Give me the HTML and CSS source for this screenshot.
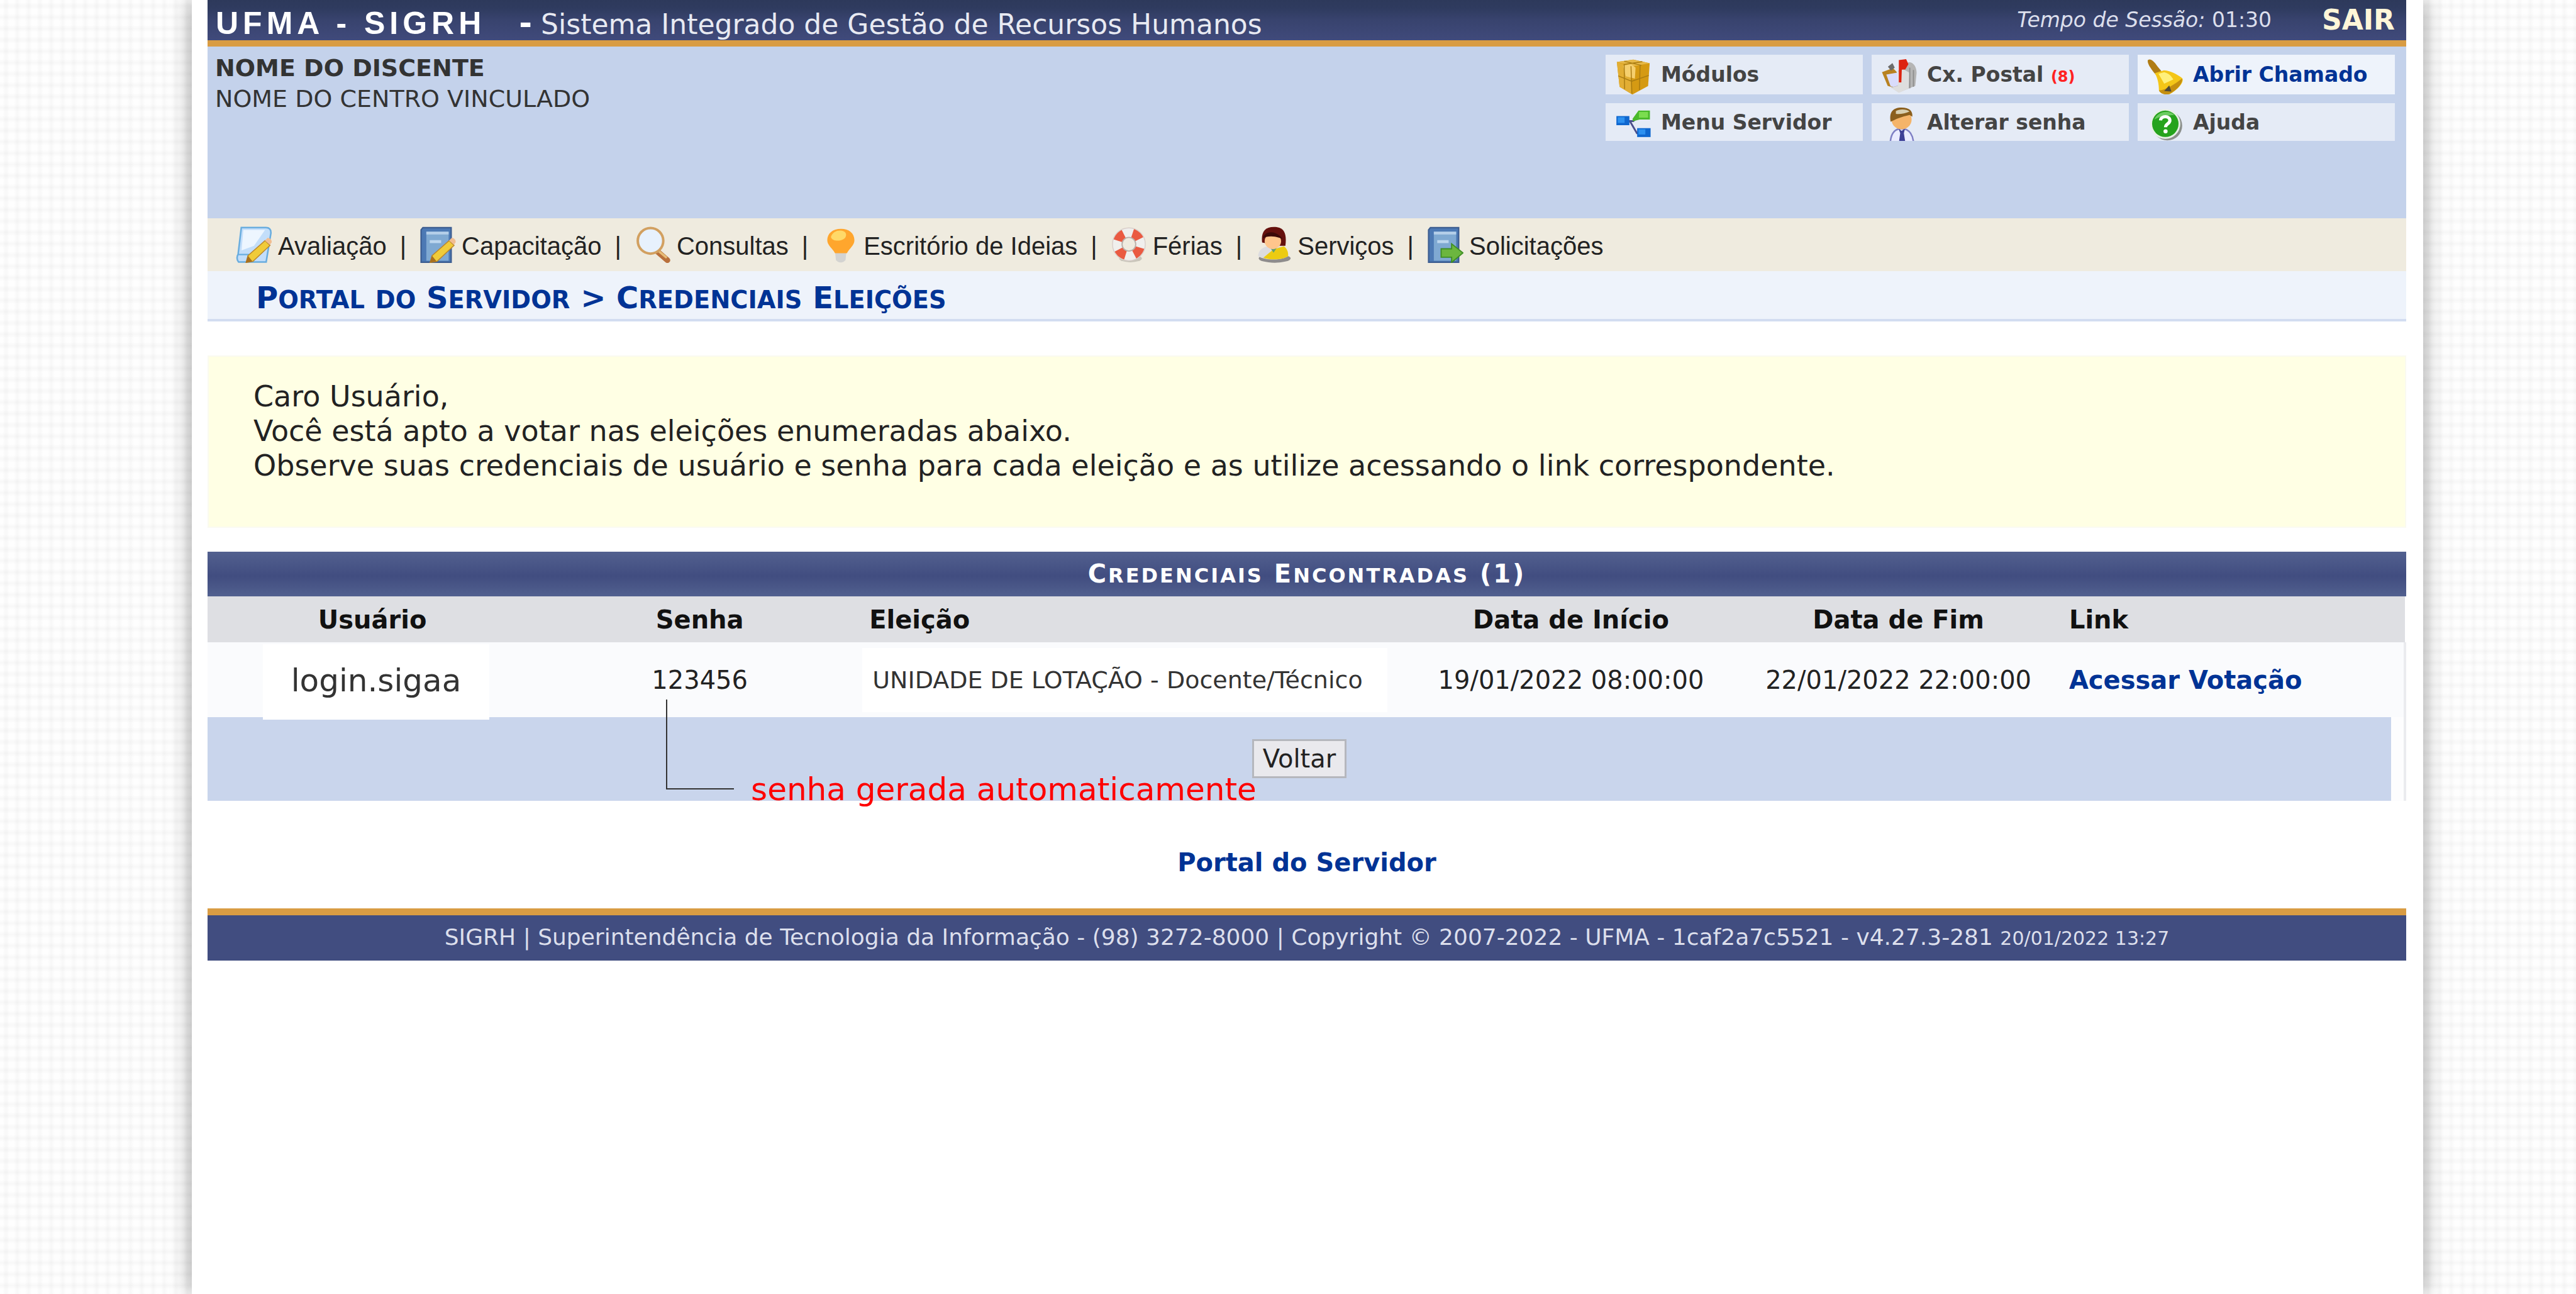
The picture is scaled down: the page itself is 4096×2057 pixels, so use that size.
FILE: index.html
```
<!DOCTYPE html>
<html lang="pt-BR">
<head>
  <meta charset="UTF-8">
  <title>SIGRH - Credenciais Eleições</title>
  <link rel="stylesheet" href="styles.css">
</head>
<body>
  <div class="pagina">

    <header class="cabecalho">
      <h1 class="titulo"><span class="sigla">UFMA - SIGRH</span><span class="traco">-</span><span class="sistema">Sistema Integrado de Gestão de Recursos Humanos</span></h1>
      <div class="sessao">
        <span><em>Tempo de Sessão:</em> 01:30</span>
        <a class="sair" href="#">SAIR</a>
      </div>
    </header>

    <section class="painel">
      <div class="usuario">
        <strong>NOME DO DISCENTE</strong><br>
        NOME DO CENTRO VINCULADO
      </div>
      <div class="modulos">
        <a href="#">
          <svg class="icone" viewBox="0 0 16 16">
            <path d="M.8 1.5 8 .5l7.2 1.6-.7 10L7.6 15.8 2 12.4z" fill="#d59a13"/>
            <path d="M.8 1.5 8 .5l7.2 1.6L8 3.4z" fill="#e6b848"/>
            <path d="M.8 1.5 7 3.6v11.8L2 12.4z" fill="#e2ae34"/>
            <path d="M3.500 3.200 7 2.400l2 1.600-.3 4.800-4-1z" fill="#f5cf6e"/>
            <path d="M1.400 7.600 7.300 10l7.500-2.600M7 3.400l.4 12M11 2.800l-.3 11M4 2.400l.2 11M4 1.200l7.600 1.800M12 1.400 4 2.600" fill="none" stroke="#a87b12" stroke-width=".4"/>
          </svg>
          Módulos
        </a>
        <a href="#">
          <svg class="icone" viewBox="0 0 16 16">
            <path d="m.4 6 4.800-1.800 1.700 1.700L6.400 13l-3.500-1z" fill="#b88220"/>
            <path d="m3 3.600 2-1.600 1 2-1.600 1.400z" fill="#6c6c6c"/>
            <path d="m2.300 7 4.700-.8.600 6.600-3.400-.6z" fill="#d9dcfb"/>
            <path d="m7.400 5.500 4.500-3.800c2.200-.3 3.700 2 3.700 4.600L15 12l-7.200 2.900-3.400-2.200 3.200-.9z" fill="#b5b5b5"/>
            <path d="m7.400 5.800 2-1.300 3 1.700-.3 7L7.800 15l-3.400-2.200 3-.8z" fill="#dedede"/>
            <path d="M12.600 4v9M14.200 5v7.400" stroke="#8d8d8d" stroke-width=".5"/>
            <path d="M7.800.7 11 .3l1 2.200-1.400 2.300-1.500.1-.2 5.600H7.800z" fill="#dd2310"/>
          </svg>
          <span>Cx. Postal <small>(8)</small></span>
        </a>
        <a class="chamado" href="#">
          <svg class="icone" viewBox="0 0 16 16">
            <path d="M.4.6C1.500 0 2.700.7 4.600 3.500L7 6.400 4.200 7.600C2 5-.3 2 .4.6z" fill="#b07c14"/>
            <path d="m3.400 6.400 4-1.200c3.200.3 5.600 1.700 8 3.400 1 1.300-1.200 4.600-5.400 7-2 .7-4.200-.5-4.800-1.600C5.200 11 4.600 8.500 3.400 6.400z" fill="#f4c617"/>
            <path d="M5 6.700 7.500 6c2.500.7 3.200 1.900 4 3.200L7.500 11z" fill="#fff07a"/>
            <path d="M15.300 8.800c.6 1.600-2 5.100-5.600 6.800-2 .5-4-.3-4.500-1.600 3-.2 7.300-3 10.100-5.200z" fill="#c58f10"/>
            <path d="m7.500 14.300 2.200-2.500 1 2.700z" fill="#4f4a38"/>
          </svg>
          Abrir Chamado
        </a>
        <a href="#">
          <svg class="icone" viewBox="0 0 16 16">
            <path d="M6 6.200h2l3.200-3M6.500 6.200 9.600 11.500h2" fill="none" stroke="#4a4f8c" stroke-width=".8"/>
            <path d="M7.700 5.200 10.300 1.600h5v3.900h-4.500l-3 .8z" fill="#49b92b"/>
            <path d="M10.500 2.200h4v2.500h-4z" fill="#7bdd4f"/>
            <path d="M.6 4h5.700v4H.6z" fill="#0f67cf"/>
            <path d="M1.200 4.500h3v2.500h-3z" fill="#2d91f0"/>
            <path d="M9.700 9.300h5.900v3.900H9.700z" fill="#0f67cf"/>
            <path d="M10.300 9.800h3v2.300h-3z" fill="#2d91f0"/>
          </svg>
          Menu Servidor
        </a>
        <a href="#">
          <svg class="icone" viewBox="0 0 16 16">
            <path d="M4 17c0-4.500 1.500-7.500 5-7.500s5.300 3 5.300 7.500z" fill="#e9ebff" stroke="#7f80c4" stroke-width=".7"/>
            <path d="m7.700 9.500 1.300 1 1.500-1-.5 2 .8 5H7.700l.7-5z" fill="#3d3f96"/>
            <ellipse cx="9" cy="5.500" rx="4.400" ry="4.300" fill="#f5b469"/>
            <path d="M4.200 6.500C3.500 2.500 5 .3 9 .3c3.400 0 5 1.500 4.700 4L12.500 3.500C10.500 4 8 4.500 4.200 6.500z" fill="#8b5f1d"/>
            <path d="M6.500 1.800C8 .8 11 .8 12.500 2c-2 1-4.500 1.200-6 1z" fill="#d8cfb0"/>
          </svg>
          Alterar senha
        </a>
        <a href="#">
          <svg class="icone" viewBox="0 0 16 16">
            <circle cx="8.900" cy="8.200" r="6.500" fill="#8b8f8b"/>
            <circle cx="8" cy="7.400" r="6.600" fill="#e6efe6"/>
            <circle cx="8" cy="7.400" r="5.800" fill="#25a31c"/>
            <path d="M3.200 5.500C4.500 2 9.500 1 12 3.600c-3 0-6.500.6-8.800 1.900z" fill="#6ccc62"/>
            <path d="M5.900 5.900C6 3.800 10 3.700 10 5.900c0 1.500-1.900 1.500-1.900 3" fill="none" stroke="#fff" stroke-width="1.400"/>
            <circle cx="8.100" cy="10.700" r=".9" fill="#fff"/>
          </svg>
          Ajuda
        </a>
      </div>
    </section>

    <nav class="menu">
      <a href="#">
        <svg class="icone" viewBox="0 0 16 16">
          <path d="M2.400.5h10.800c1.500 0 2.200.8 2.200 2.300L13.300 15.600H1.200C.3 14.500.4 13 1 12.200z" fill="#c3defa" stroke="#69addf" stroke-width=".7"/>
          <path d="M3.300 1.500h9.500L8 8.500l-5.500 2z" fill="#edf6ff"/>
          <path d="M1 12.300h4.500v3.200" fill="none" stroke="#69addf" stroke-width=".6"/>
          <path d="M12.800 6.200 15 8.300l-7.500 7-3 .5.800-3z" fill="#f0cb39" stroke="#bb862b" stroke-width=".4"/>
          <path d="m12.800 6.200 1-1.100c.8-.4 2.200.8 1.900 1.900L14.900 8z" fill="#f1bd91"/>
          <path d="m5.300 12.800 2 2.500-3 .6z" fill="#a9701e"/>
        </svg>
        <span>Avaliação</span>
      </a>
      <span class="sep">|</span>
      <a href="#">
        <svg class="icone" viewBox="0 0 16 16">
          <path d="M1.500.5h12.400v15.200H.7V1.500z" fill="#4c79b4" stroke="#3b5c90" stroke-width=".6"/>
          <path d="M3 2.300h9.800V15H3z" fill="#7fa9d2"/>
          <path d="M3 2.300h9.800v1.200H3z" fill="#b5cfe9"/>
          <path d="M4.500 6h5v1.300h-5z" fill="#bcd6ee"/>
          <path d="M13 6.200 15.200 8.300l-7.500 7-3 .5.800-3z" fill="#f0cb39" stroke="#bb862b" stroke-width=".4"/>
          <path d="m13 6.200 1-1.100c.8-.4 2.200.8 1.800 1.900L15.100 8z" fill="#f1bd91"/>
          <path d="m5.500 12.800 2 2.500-3 .6z" fill="#a9701e"/>
        </svg>
        <span>Capacitação</span>
      </a>
      <span class="sep">|</span>
      <a href="#">
        <svg class="icone" viewBox="0 0 16 16">
          <path d="m9.800 10.800 4.600 4" stroke="#b9703b" stroke-width="2.500" stroke-linecap="round"/>
          <path d="m10.800 11 3 2.500" stroke="#e7bd76" stroke-width="1" stroke-linecap="round"/>
          <circle cx="7" cy="6.300" r="5.600" fill="#e7f1fd" stroke="#d2a060" stroke-width="1.100"/>
        </svg>
        <span>Consultas</span>
      </a>
      <span class="sep">|</span>
      <a href="#">
        <svg class="icone" viewBox="0 0 16 16">
          <path d="M6 11h5l-.4 3.700c-1 1.500-3.200 1.500-4.200 0z" fill="#d3d3d1"/>
          <path d="M2.600 6C2.600 3 5 1 8.600 1s5.900 2 5.900 5c0 2.300-2 3.400-3.300 5.700H6C4.800 9.500 2.600 8.300 2.600 6z" fill="#ffa62d"/>
          <path d="M4.200 4.600C4.800 2.700 6.300 1.800 8.300 1.800c2.200 0 3 1.400 2.300 2.900C9.700 6.500 4.900 7 4.200 4.600z" fill="#ffd968"/>
        </svg>
        <span>Escritório de Ideias</span>
      </a>
      <span class="sep">|</span>
      <a href="#">
        <svg class="icone" viewBox="0 0 16 16">
          <ellipse cx="8.700" cy="14" rx="5" ry="1.700" fill="#c9c5ba"/>
          <circle cx="8" cy="7.800" r="5.100" fill="none" stroke="#f0efed" stroke-width="4.200"/>
          <circle cx="8" cy="7.800" r="5.100" fill="none" stroke="#ea5a41" stroke-width="4.200" stroke-dasharray="4 4.010" stroke-dashoffset="-1.500"/>
          <circle cx="8" cy="7.800" r="7.200" fill="none" stroke="#d9cfca" stroke-width=".4"/>
          <circle cx="8" cy="7.800" r="3" fill="none" stroke="#b9afa9" stroke-width=".5"/>
        </svg>
        <span>Férias</span>
      </a>
      <span class="sep">|</span>
      <a href="#">
        <svg class="icone" viewBox="0 0 16 16">
          <ellipse cx="8.500" cy="14" rx="7" ry="1.900" fill="#8e8c8c"/>
          <path d="M1.300 13c0-2.500 2-4.500 6.500-4.500s6.600 2 6.600 4.500c-3 2-10 2-13.100 0z" fill="#dcdce0"/>
          <path d="M3.500 13.700 8 10l4.500-1.300c1.500 1 2 2.600 1.900 4.300-2.600 1.600-7.300 1.900-10.900.7z" fill="#eccb12"/>
          <path d="M6 8.500h4l-2 3z" fill="#65a06d"/>
          <path d="M3 7c-.5-4.300.9-6.800 5.200-6.800 4 0 5.800 2.300 5 8.300H11z" fill="#65100d"/>
          <ellipse cx="7.700" cy="6.500" rx="3.600" ry="3.400" fill="#ffc58c"/>
          <path d="M3.200 5.200C4.400 1.500 9.500 1.800 12 5.500 8.500 4 5.500 4 3.200 5.200z" fill="#3c0908"/>
        </svg>
        <span>Serviços</span>
      </a>
      <span class="sep">|</span>
      <a href="#">
        <svg class="icone" viewBox="0 0 16 16">
          <path d="M1.500.5h12.400v15.200H.7V1.500z" fill="#4c79b4" stroke="#3b5c90" stroke-width=".6"/>
          <path d="M3 2.300h9.800V15H3z" fill="#7fa9d2"/>
          <path d="M3 2.300h9.800v1.200H3z" fill="#b5cfe9"/>
          <path d="M4.500 6h5v1.300h-5z" fill="#bcd6ee"/>
          <path d="M6.200 9.800h4.600V7.600l5 4-5 4.200v-2.300H6.200z" fill="#6cb63f" stroke="#3e8e23" stroke-width=".5"/>
        </svg>
        <span>Solicitações</span>
      </a>
    </nav>

    <h2 class="caminho"><span class="vs">Portal</span> <span class="vs baixa">do</span> <span class="vs">Servidor</span> &gt; <span class="vs">Credenciais</span> <span class="vs">Eleições</span></h2>

    <p class="aviso">
      Caro Usuário,<br>
      Você está apto a votar nas eleições enumeradas abaixo.<br>
      Observe suas credenciais de usuário e senha para cada eleição e as utilize acessando o link correspondente.
    </p>

    <table class="credenciais">
      <caption><span class="vs">Credenciais</span> <span class="vs">Encontradas</span> (1)</caption>
      <colgroup>
        <col class="c-usuario"><col class="c-senha"><col class="c-eleicao"><col class="c-data"><col class="c-data"><col>
      </colgroup>
      <thead>
        <tr>
          <th>Usuário</th>
          <th>Senha</th>
          <th class="esq">Eleição</th>
          <th>Data de Início</th>
          <th>Data de Fim</th>
          <th class="esq">Link</th>
        </tr>
      </thead>
      <tbody>
        <tr>
          <td class="usuario-cel"><span class="tarja-login">login.sigaa</span></td>
          <td class="senha">
            123456
            <span class="nota-linha"></span>
            <span class="nota">senha gerada automaticamente</span>
          </td>
          <td class="eleicao"><span class="tarja">UNIDADE DE LOTAÇÃO - Docente/Técnico</span></td>
          <td>19/01/2022 08:00:00</td>
          <td>22/01/2022 22:00:00</td>
          <td class="esq"><a href="#">Acessar Votação</a></td>
        </tr>
      </tbody>
    </table>
    <div class="acoes">
      <div class="faixa"><button type="button">Voltar</button></div>
    </div>

    <p class="voltar-portal"><a href="#">Portal do Servidor</a></p>

    <footer class="rodape">
      SIGRH | Superintendência de Tecnologia da Informação - (98) 3272-8000 | Copyright © 2007-2022 - UFMA - 1caf2a7c5521 - v4.27.3-281 <small>20/01/2022 13:27</small>
    </footer>

  </div>
</body>
</html>
```

FILE: styles.css
```
* { box-sizing: border-box; }

body {
  margin: 0;
  font-family: Verdana, "DejaVu Sans", sans-serif;
  font-size: 40px;
  color: #222;
  background-color: #fefefe;
  background-image:
    repeating-linear-gradient(90deg, transparent 0 4px, rgba(0, 0, 0, .025) 9px 10px, transparent 15px 18px),
    repeating-linear-gradient(180deg, transparent 0 4px, rgba(0, 0, 0, .025) 9px 10px, transparent 15px 18px);
}

a { color: #003395; font-weight: bold; text-decoration: none; }

.pagina {
  min-height: 100vh;
  margin: 0 243px 0 305px;
  padding: 0 27px 0 25px;
  background: #fff;
  box-shadow: 0 0 32px rgba(0, 0, 0, .4);
}

.icone { flex: none; width: 58px; height: 58px; }

/* palavras em versalete: inicial maior que o resto */
.vs { display: inline-block; font-size: 80%; line-height: 1; text-transform: uppercase; }
.vs::first-letter { font-size: 125%; }
.vs.baixa::first-letter { font-size: 100%; }

/* cabeçalho */
.cabecalho {
  display: flex;
  justify-content: space-between;
  height: 74px;
  padding: 0 18px 0 13px;
  border-bottom: 10px solid #d99c43;
  background: linear-gradient(#2d395b 0, #2f3b5f 20%, #38436e 50%, #404a7b 100%);
  color: #fff;
  line-height: 64px;
}
.titulo { margin: 0; padding-top: 5px; font-size: 44px; font-weight: normal; white-space: nowrap; color: #e8eaf2; }
.sigla { font-family: Arial, "Liberation Sans", sans-serif; font-size: 50px; font-weight: bold; letter-spacing: 7px; color: #fff; }
.traco { margin: 0 14px 0 53px; font-size: 50px; font-weight: bold; color: #fff; }
.sessao { display: flex; gap: 80px; font-size: 33px; color: #dcdfec; }
.sair { font-size: 44px; color: #fff6d8; }

/* painel do usuário */
.painel {
  display: flex;
  justify-content: space-between;
  align-items: flex-start;
  height: 273px;
  padding: 0 18px 0 12px;
  background: #c4d2eb;
}
.usuario { padding-top: 10px; font-size: 38px; line-height: 49px; color: #333; }
.modulos { display: grid; grid-template-columns: repeat(3, 409px); grid-template-rows: 63px 60px; gap: 14px; padding-top: 13px; }
.modulos a {
  display: flex;
  gap: 15px;
  align-items: center;
  overflow: hidden;
  padding-left: 15px;
  background: #e5ebf6;
  color: #444;
  font-size: 33px;
}
.modulos .icone { align-self: flex-start; margin-top: 6px; }
.modulos .chamado { background: #eef3fb; color: #003395; }
.modulos small { font-size: 24px; color: #f22; }

/* menu */
.menu {
  display: flex;
  align-items: center;
  gap: 21px;
  height: 84px;
  padding-left: 45px;
  background: #efebdf;
  font-family: Arial, "Liberation Sans", sans-serif;
}
.menu a { display: flex; align-items: center; gap: 9px; color: #222; font-weight: normal; }
.menu a span, .sep { padding-top: 4px; }

.caminho {
  margin: 0;
  padding: 8px 77px 0;
  border-bottom: 4px solid #d2ddf1;
  background: #eef3fb;
  color: #003395;
  font-size: 48px;
  line-height: 68px;
}

.aviso {
  margin: 54px 0 38px;
  padding: 36px 71px 69px;
  border: 2px solid #fafaf0;
  background: #ffffe4;
  font-size: 46px;
  line-height: 55px;
}

/* tabela */
.credenciais { width: 100%; border-collapse: collapse; table-layout: fixed; }
.credenciais caption {
  background: linear-gradient(#52608f, #414d80 55%, #51608f);
  color: #fff;
  font-weight: bold;
  letter-spacing: 3px;
  line-height: 71px;
}
.c-usuario { width: 15%; }
.c-senha { width: 14.8%; }
.c-eleicao { width: 24.8%; }
.c-data { width: 14.9%; }
.credenciais th, .credenciais td { padding: 0; text-align: center; }
.credenciais th { height: 73px; background: #dedfe3; color: #111; }
.credenciais td { height: 119px; background: #fafbfd; }
.credenciais .esq { padding-left: 11px; text-align: left; }
.credenciais td:last-child { border-right: 4px solid #ebecef; }

.usuario-cel, .senha { position: relative; }
.tarja-login {
  position: absolute;
  top: 3px;
  left: 88px;
  width: 360px;
  background: #fff;
  font-size: 50px;
  line-height: 116px;
  padding-bottom: 4px;
  color: #333;
}
.credenciais .eleicao { text-align: left; }
.tarja { display: block; margin-right: 32px; padding-left: 16px; background: #fff; font-size: 38px; line-height: 102px; color: #333; white-space: nowrap; }

/* anotação sobre a senha */
.nota-linha {
  position: absolute;
  top: 91px;
  left: 205px;
  width: 108px;
  height: 143px;
  border: solid #333;
  border-width: 0 0 2px 2px;
}
.nota { position: absolute; top: 205px; left: 340px; font-size: 50px; line-height: 58px; white-space: nowrap; color: #f00; }

.acoes { padding-right: 20px; border-right: 4px solid #ebecef; background: #fdfdfe; }
.faixa { padding: 35px 0 36px; background: #c9d5ec; text-align: center; }
.acoes button {
  display: block;
  height: 62px;
  margin: 0 auto;
  padding: 0 14px;
  border: 3px solid #b5b7bd;
  background: #e9e9ed;
  color: #222;
  font: inherit;
}

.voltar-portal { margin: 0; padding: 75px 0 49px; line-height: 47px; text-align: center; }

.rodape {
  border-top: 11px solid #d99c43;
  background: #414d80;
  color: #dcdfec;
  font-size: 36px;
  line-height: 70px;
  text-align: center;
}
.rodape small { font-size: 30px; }
```
